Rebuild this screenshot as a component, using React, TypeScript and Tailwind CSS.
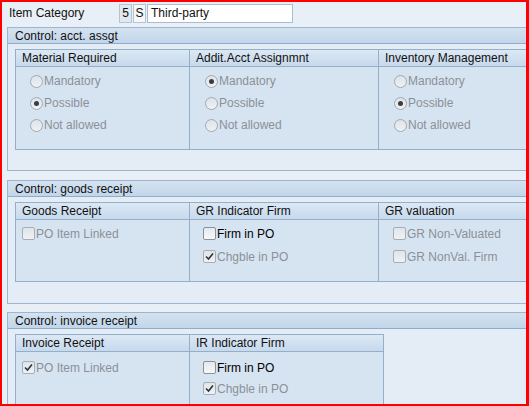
import React from 'react';

const font = { fontFamily: '"Liberation Sans", Arial, sans-serif' };

const Radio: React.FC<{ checked?: boolean; label: string }> = ({ checked, label }) => (
    <div className="flex items-center h-[22px]">
        <span className="w-[13px] h-[13px] rounded-full border border-[#a3a8ae] bg-gradient-to-b from-[#dde3ea] to-[#eef2f6] flex items-center justify-center">
            {checked && <span className="w-[5px] h-[5px] rounded-full bg-[#3a3d40]" />}
        </span>
        <span className="ml-px text-[#8c9096]">{label}</span>
    </div>
);

const Check: React.FC<{ checked?: boolean; label: string; enabled?: boolean; h?: string }> = ({ checked, label, enabled, h = 'h-[23px]' }) => (
    <div className={`flex items-center ${h}`}>
        <span className={`w-[13px] h-[13px] rounded-[2px] border flex items-center justify-center ${enabled ? 'border-[#8d9298] bg-gradient-to-b from-[#e4e9ee] to-[#f6f8fa]' : 'border-[#a8adb3] bg-gradient-to-b from-[#dfe5eb] to-[#eef2f6]'}`}>
            {checked && (
                <svg width="9" height="9" viewBox="0 0 9 9">
                    <path d="M1 4.5 L3.5 7 L8 1.5" stroke="#2f3338" strokeWidth="1.6" fill="none" />
                </svg>
            )}
        </span>
        <span className={`ml-px ${enabled ? 'text-black' : 'text-[#8c9096]'}`}>{label}</span>
    </div>
);

const SubBox: React.FC<{ title: string; w: string; first?: boolean; children: React.ReactNode; pad: string; body: string }> = ({ title, w, first, children, pad, body }) => (
    <div className={`${w} shrink-0 flex flex-col ${first ? '' : 'border-l border-[#93afca]'}`}>
        <div className="h-[17px] pl-[6px] flex items-center bg-gradient-to-b from-[#dce8f4] to-[#c7d9ec] border-b border-[#93afca] rounded-t-[3px] text-[#111]">
            {title}
        </div>
        <div className={`${body} ${pad} bg-[#d6e4f2]`}>{children}</div>
    </div>
);

const Section: React.FC<{ title: string; children: React.ReactNode; pb: string }> = ({ title, children, pb }) => (
    <div className="w-[600px] border border-[#9db6ce] bg-[#e4ecf5]">
        <div className="h-[16px] pl-[7px] flex items-center bg-gradient-to-b from-[#d4e2f0] to-[#c2d6ea] border-b border-[#8faccb] text-[#111]">
            {title}
        </div>
        <div className={`pl-[7px] pt-[5px] ${pb}`}>{children}</div>
    </div>
);

export default function App() {
    return (
        <div style={font} className="w-[529px] h-[406px] overflow-hidden border-t-2 border-l-2 border-b-2 border-r-[3px] border-[#ff0000] bg-[#e9eff6] text-[12px] leading-none">
            <div className="w-[600px] pl-[5px]">
                <div className="flex items-center h-[20px] mt-px">
                    <span className="w-[110px] pl-[2px] text-[#111]">Item Category</span>
                    <span className="w-[13px] h-[19px] ml-[2px] flex items-center justify-center border border-[#b4c4d4] bg-[#e2e8ef] text-[#111]">5</span>
                    <span className="w-[13px] h-[19px] ml-px flex items-center justify-center border border-[#b4c4d4] bg-[#f4f6f8] text-[#111]">S</span>
                    <span className="w-[146px] h-[19px] ml-px pl-[3px] flex items-center border border-[#a9bdd2] bg-white text-[#111]">Third-party</span>
                </div>
                <div className="mt-[4px]">
                    <Section title="Control: acct. assgt" pb="pb-[20px]">
                        <div className="flex border border-[#93afca] w-[560px]">
                            <SubBox first title="Material Required" w="w-[173px]" pad="pl-[14px] pt-[3px]" body="h-[82px]">
                                <Radio label="Mandatory" />
                                <Radio checked label="Possible" />
                                <Radio label="Not allowed" />
                            </SubBox>
                            <SubBox title="Addit.Acct Assignmnt" w="w-[189px]" pad="pl-[15px] pt-[3px]" body="h-[82px]">
                                <Radio checked label="Mandatory" />
                                <Radio label="Possible" />
                                <Radio label="Not allowed" />
                            </SubBox>
                            <SubBox title="Inventory Management" w="w-[190px]" pad="pl-[15px] pt-[3px]" body="h-[82px]">
                                <Radio label="Mandatory" />
                                <Radio checked label="Possible" />
                                <Radio label="Not allowed" />
                            </SubBox>
                        </div>
                    </Section>
                </div>
                <div className="mt-[9px]">
                    <Section title="Control: goods receipt" pb="pb-[21px]">
                        <div className="flex border border-[#93afca] w-[560px]">
                            <SubBox first title="Goods Receipt" w="w-[173px]" pad="pl-[6px] pt-[2px]" body="h-[61px]">
                                <Check label="PO Item Linked" />
                            </SubBox>
                            <SubBox title="GR Indicator Firm" w="w-[189px]" pad="pl-[13px] pt-[2px]" body="h-[61px]">
                                <Check enabled label="Firm in PO" />
                                <Check checked label="Chgble in PO" />
                            </SubBox>
                            <SubBox title="GR valuation" w="w-[190px]" pad="pl-[14px] pt-[2px]" body="h-[61px]">
                                <Check label="GR Non-Valuated" />
                                <Check label="GR NonVal. Firm" />
                            </SubBox>
                        </div>
                    </Section>
                </div>
                <div className="mt-[8px]">
                    <Section title="Control: invoice receipt" pb="pb-[20px]">
                        <div className="flex border border-[#93afca] w-fit">
                            <SubBox first title="Invoice Receipt" w="w-[173px]" pad="pl-[6px] pt-[5px]" body="h-[70px]">
                                <Check checked label="PO Item Linked" h="h-[21px]" />
                            </SubBox>
                            <SubBox title="IR Indicator Firm" w="w-[194px]" pad="pl-[13px] pt-[5px]" body="h-[70px]">
                                <Check enabled label="Firm in PO" h="h-[21px]" />
                                <Check checked label="Chgble in PO" h="h-[21px]" />
                            </SubBox>
                        </div>
                    </Section>
                </div>
            </div>
        </div>
    );
}
